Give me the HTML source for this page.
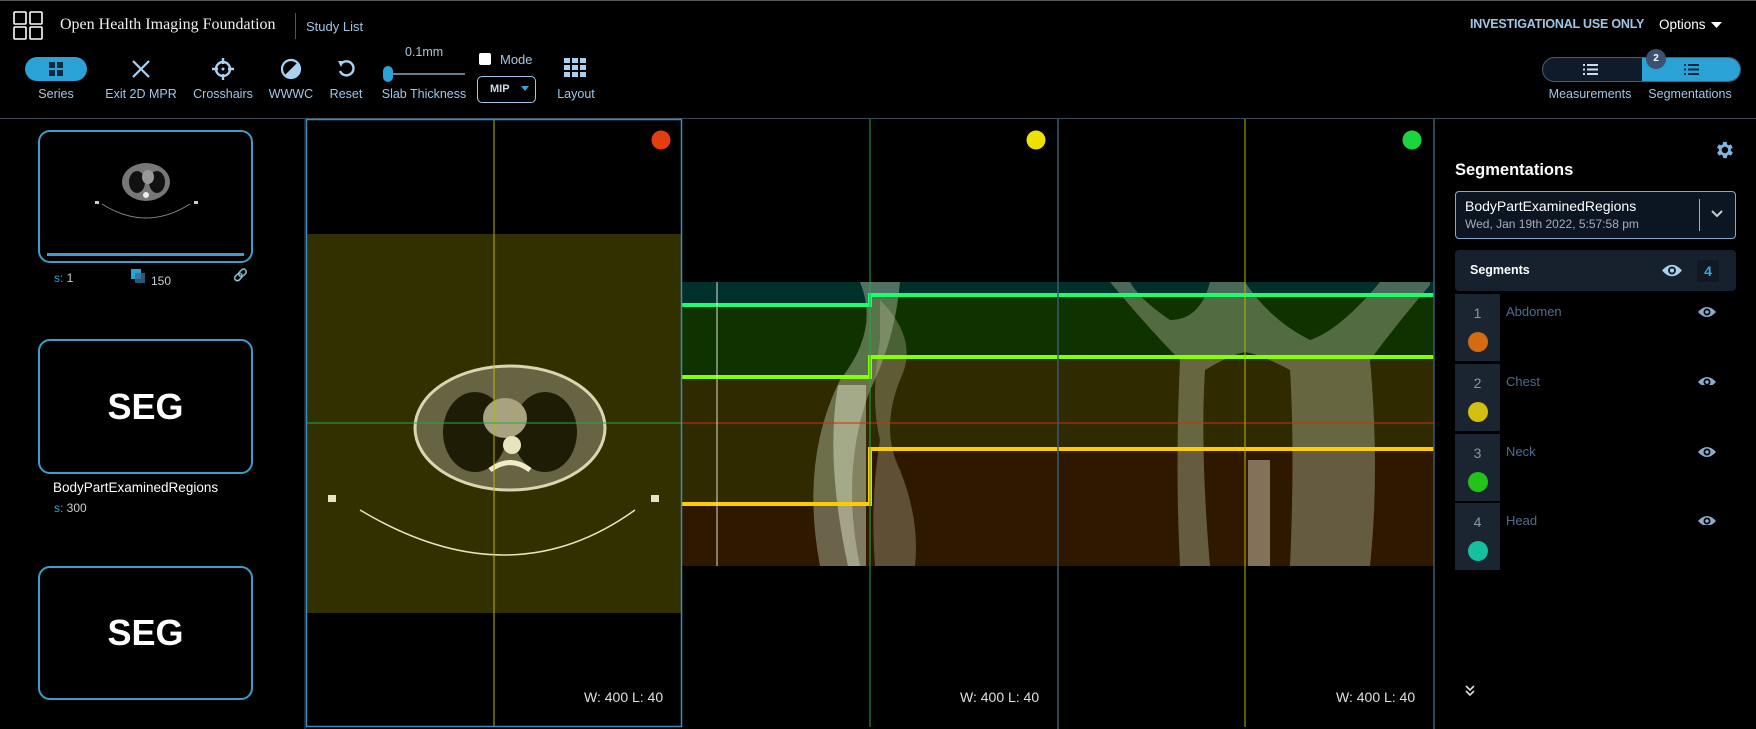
<!DOCTYPE html>
<html><head><meta charset="utf-8"><style>
*{margin:0;padding:0;box-sizing:border-box}
body{width:1756px;height:729px;background:#000;overflow:hidden;position:relative;font-family:"Liberation Sans",sans-serif;color:#fff}
.a{position:absolute}
.lbl{position:absolute;top:87px;font-size:12.5px;color:#9fc6e6;transform:translateX(-50%);white-space:nowrap}
.thumb{position:absolute;left:38px;width:215px;border:2px solid #3a9fcc;border-radius:12px}
.seg{font-size:36px;font-weight:bold;text-align:center;color:#fff}
.row{position:absolute;left:1455px;width:281px;height:67px}
.num{position:absolute;left:0;top:0;width:45px;height:67px;background:#1b2431;color:#8a97a8;font-size:14px;text-align:center;padding-top:11px}
.dot{position:absolute;left:13px;top:38px;width:20px;height:20px;border-radius:50%}
.nm{position:absolute;left:51px;top:10px;font-size:13px;color:#4f6c91}
.wl{position:absolute;font-size:14px;color:#e0e0e0}
</style></head><body>
<div class="a" style="left:0;top:0;width:1756px;height:1px;background:#555"></div>
<svg class="a" style="left:13px;top:11px" width="30" height="29" viewBox="0 0 30 29"><g fill="none" stroke="#fff" stroke-width="1.6"><rect x="1" y="1" width="12" height="12" rx="1"/><rect x="17" y="1" width="12" height="12" rx="1"/><rect x="1" y="16" width="12" height="12" rx="1"/><rect x="17" y="16" width="12" height="12" rx="1"/></g></svg>
<div class="a" style="left:60px;top:16px;font-family:'Liberation Serif',serif;font-size:16px;color:#eee">Open Health Imaging Foundation</div>
<div class="a" style="left:295px;top:13px;width:1px;height:26px;background:#555"></div>
<div class="a" style="left:306px;top:19px;font-size:13px;color:#a0c4e4">Study List</div>
<div class="a" style="left:1470px;top:17px;font-size:12.5px;font-weight:bold;color:#9fc6e6;letter-spacing:-0.2px">INVESTIGATIONAL USE ONLY</div>
<div class="a" style="left:1659px;top:17px;font-size:13.5px;color:#fff">Options</div>
<svg class="a" style="left:1711px;top:22px" width="11" height="7"><path d="M0 0H11L5.5 6z" fill="#fff"/></svg>

<div class="a" style="left:25px;top:57px;width:62px;height:24px;border-radius:12px;background:#2ba2d6"></div>
<svg class="a" style="left:49px;top:62px" width="14" height="14"><g fill="#0b2840"><rect x="0" y="0" width="6" height="6"/><rect x="8" y="0" width="6" height="6"/><rect x="0" y="8" width="6" height="6"/><rect x="8" y="8" width="6" height="6"/></g></svg>
<div class="lbl" style="left:56px;color:#a9c6dd">Series</div>
<svg class="a" style="left:131px;top:59px" width="20" height="20"><path d="M2 2L18 18M18 2L2 18" stroke="#a9d2f2" stroke-width="2.2"/></svg>
<div class="lbl" style="left:141px">Exit 2D MPR</div>
<svg class="a" style="left:212px;top:58px" width="22" height="22"><circle cx="11" cy="11" r="7" fill="none" stroke="#a9d2f2" stroke-width="2.4"/><path d="M11 0V6M11 16V22M0 11H6M16 11H22" stroke="#a9d2f2" stroke-width="2.4"/><circle cx="11" cy="11" r="1.5" fill="#a9d2f2"/></svg>
<div class="lbl" style="left:223px">Crosshairs</div>
<svg class="a" style="left:280px;top:58px" width="22" height="22"><circle cx="11" cy="11" r="9" fill="none" stroke="#a9d2f2" stroke-width="2.2"/><path d="M17.4 4.6A9 9 0 0 1 4.6 17.4z" fill="#a9d2f2"/></svg>
<div class="lbl" style="left:291px">WWWC</div>
<svg class="a" style="left:336px;top:58px" width="20" height="20"><path d="M5 6A7 7 0 1 1 4 13" fill="none" stroke="#a9d2f2" stroke-width="2.4"/><path d="M2 3L8 3L5 9z" fill="#a9d2f2"/></svg>
<div class="lbl" style="left:346px">Reset</div>
<div class="a" style="left:405px;top:45px;font-size:12.5px;color:#a9c6dd">0.1mm</div>
<div class="a" style="left:390px;top:73px;width:75px;height:2px;background:#6b7c8c"></div>
<div class="a" style="left:383px;top:66px;width:10px;height:16px;border-radius:5px;background:#2ba2d6"></div>
<div class="lbl" style="left:424px">Slab Thickness</div>
<div class="a" style="left:479px;top:53px;width:12px;height:12px;border-radius:2px;background:#fff"></div>
<div class="a" style="left:500px;top:52px;font-size:13px;color:#a9c6dd">Mode</div>
<div class="a" style="left:477px;top:76px;width:59px;height:27px;border:1px solid #9fc6e6;border-radius:5px"></div>
<div class="a" style="left:490px;top:83px;font-size:11px;font-weight:bold;color:#c8dcec">MIP</div>
<svg class="a" style="left:521px;top:86px" width="8" height="5"><path d="M0 0H8L4 5z" fill="#3aa3d6"/></svg>
<svg class="a" style="left:564px;top:58px" width="22" height="20"><g fill="#a9d2f2"><rect x="0" y="0" width="6" height="5"/><rect x="8" y="0" width="6" height="5"/><rect x="16" y="0" width="6" height="5"/><rect x="0" y="7" width="6" height="5"/><rect x="8" y="7" width="6" height="5"/><rect x="16" y="7" width="6" height="5"/><rect x="0" y="14" width="6" height="5"/><rect x="8" y="14" width="6" height="5"/><rect x="16" y="14" width="6" height="5"/></g></svg>
<div class="lbl" style="left:576px">Layout</div>

<div class="a" style="left:1542px;top:57px;width:199px;height:25px;border:1px solid #4a5d72;border-radius:13px;background:#0f1b2a;overflow:hidden"><div class="a" style="left:99px;top:0;width:100px;height:25px;background:#2ba2d6"></div></div>
<svg class="a" style="left:1583px;top:64px" width="15" height="11"><g fill="#cde"><rect x="0" y="0" width="2" height="2"/><rect x="4" y="0" width="11" height="2"/><rect x="0" y="4.5" width="2" height="2"/><rect x="4" y="4.5" width="11" height="2"/><rect x="0" y="9" width="2" height="2"/><rect x="4" y="9" width="11" height="2"/></g></svg>
<svg class="a" style="left:1684px;top:64px" width="15" height="11"><g fill="#0b2840"><rect x="0" y="0" width="2" height="2"/><rect x="4" y="0" width="11" height="2"/><rect x="0" y="4.5" width="2" height="2"/><rect x="4" y="4.5" width="11" height="2"/><rect x="0" y="9" width="2" height="2"/><rect x="4" y="9" width="11" height="2"/></g></svg>
<div class="a" style="left:1646px;top:49px;width:20px;height:20px;border-radius:50%;background:#3c5170;font-size:10px;font-weight:bold;text-align:center;line-height:20px">2</div>
<div class="lbl" style="left:1590px">Measurements</div>
<div class="lbl" style="left:1690px">Segmentations</div>

<div class="a" style="left:0;top:118px;width:1756px;height:1px;background:#3a4a5a"></div>

<div class="a" style="left:304px;top:119px;width:2px;height:610px;background:#1c2430"></div>
<div class="thumb" style="top:130px;height:133px">
<svg class="a" style="left:0;top:0" width="211" height="129"><ellipse cx="106" cy="50" rx="24" ry="19" fill="#777"/><ellipse cx="97" cy="50" rx="8" ry="11" fill="#111"/><ellipse cx="117" cy="50" rx="8" ry="11" fill="#111"/><ellipse cx="108" cy="45" rx="6" ry="7" fill="#999"/><circle cx="106" cy="63" r="3" fill="#eee"/><path d="M62 72Q106 100 150 72" fill="none" stroke="#888" stroke-width="1"/><rect x="55" y="69" width="4" height="3" fill="#ccc"/><rect x="154" y="69" width="4" height="3" fill="#ccc"/><rect x="7" y="121" width="197" height="3" fill="#3a9fcc"/></svg></div>
<div class="a" style="left:54px;top:271px;font-size:12px;color:#3a9fcc">s: <span style="color:#ccc">1</span></div>
<div class="a" style="left:131px;top:269px;width:10px;height:10px;background:#2ba2d6"></div>
<div class="a" style="left:135px;top:273px;width:10px;height:10px;background:#3b6d8d;opacity:.8"></div>
<div class="a" style="left:151px;top:274px;font-size:12px;color:#ccc">150</div>
<div class="a" style="left:233px;top:268px;font-size:12px;color:#ccc">🔗</div>
<div class="thumb seg" style="top:339px;height:135px;line-height:131px">SEG</div>
<div class="a" style="left:53px;top:480px;font-size:13.5px;color:#fff">BodyPartExaminedRegions</div>
<div class="a" style="left:54px;top:501px;font-size:12px;color:#3a9fcc">s: <span style="color:#ccc">300</span></div>
<div class="thumb seg" style="top:566px;height:134px;line-height:130px">SEG</div>

<svg class="a" style="left:0;top:0" width="1756" height="729">
<rect x="307" y="234" width="374" height="379" fill="#333000"/>
<ellipse cx="510" cy="428" rx="95" ry="62" fill="#6d6a4a" opacity=".9"/>
<ellipse cx="510" cy="428" rx="95" ry="62" fill="none" stroke="#d9d6b0" stroke-width="3"/>
<ellipse cx="475" cy="432" rx="32" ry="40" fill="#1e1c05"/>
<ellipse cx="545" cy="432" rx="32" ry="40" fill="#1e1c05"/>
<ellipse cx="505" cy="418" rx="22" ry="20" fill="#a8a27e"/>
<circle cx="512" cy="445" r="9" fill="#e8e4c0"/>
<path d="M490 470Q510 455 530 470" fill="none" stroke="#f0ecc8" stroke-width="5"/>
<rect x="328" y="495" width="8" height="7" fill="#e8e4c0"/><rect x="651" y="495" width="8" height="7" fill="#e8e4c0"/>
<path d="M360 510Q510 600 635 510" fill="none" stroke="#e8e4c0" stroke-width="1.5"/>
<rect x="682" y="282" width="752" height="284" fill="#00302a"/>
<path d="M682 305H870V295H1434V566H682z" fill="#0f3300"/>
<path d="M682 377H870V357H1434V566H682z" fill="#302a00"/>
<path d="M682 504H870V449H1434V566H682z" fill="#2e1800"/>
<!-- sagittal anatomy -->
<path d="M860 282Q880 330 840 380Q800 460 820 566H860Q840 470 870 390Q895 340 900 282z" fill="#c8d8b8" opacity=".4"/>
<path d="M880 300Q920 340 900 380Q880 430 900 470Q920 520 915 566H875Q870 500 880 440Q870 400 880 340z" fill="#b8b898" opacity=".35"/>
<path d="M838 385Q825 460 848 566H866V385z" fill="#e8f0d8" opacity=".45"/>
<!-- coronal anatomy -->
<path d="M1110 282Q1150 330 1180 360Q1175 470 1180 566H1210Q1200 450 1205 370Q1230 355 1245 352Q1262 355 1290 370Q1295 450 1290 566H1370Q1380 470 1370 360Q1400 320 1430 285V282H1380Q1340 330 1310 340Q1270 320 1245 282H1210Q1200 320 1170 320Q1140 300 1130 282z" fill="#b8c0a0" opacity=".4"/>
<rect x="1248" y="460" width="22" height="106" fill="#e8e0c8" opacity=".45"/>
<polyline points="682,305 870,305 870,295 1434,295" fill="none" stroke="#1aff70" stroke-width="4"/>
<polyline points="682,377 870,377 870,357 1434,357" fill="none" stroke="#88ff00" stroke-width="4"/>
<polyline points="682,504 870,504 870,449 1434,449" fill="none" stroke="#ffcc00" stroke-width="4"/>
<line x1="494" y1="119" x2="494" y2="727" stroke="#b8b800" stroke-width="1"/>
<line x1="307" y1="423" x2="681" y2="423" stroke="#22aa44" stroke-width="1"/>
<line x1="682" y1="423" x2="1434" y2="423" stroke="#cc3300" stroke-width="1"/>
<line x1="717" y1="282" x2="717" y2="566" stroke="#ddd" stroke-width="1"/>
<line x1="870" y1="119" x2="870" y2="727" stroke="#22aa44" stroke-width="1"/>
<line x1="1245" y1="119" x2="1245" y2="727" stroke="#b8b800" stroke-width="1"/>
<line x1="1058" y1="119" x2="1058" y2="729" stroke="#3c5a70" stroke-width="1.5"/>
<line x1="1434" y1="119" x2="1434" y2="729" stroke="#3c5a70" stroke-width="1.5"/>
<rect x="306.5" y="119.5" width="375" height="607" fill="none" stroke="#3d8bbd" stroke-width="1.5"/>
<circle cx="661" cy="140" r="9.5" fill="#e43d12"/>
<circle cx="1036" cy="140" r="9.5" fill="#f0e000"/>
<circle cx="1412" cy="140" r="9.5" fill="#1ad63c"/>
</svg>
<div class="wl" style="left:584px;top:689px">W: 400 L: 40</div>
<div class="wl" style="left:960px;top:689px">W: 400 L: 40</div>
<div class="wl" style="left:1336px;top:689px">W: 400 L: 40</div>

<svg class="a" style="left:1713px;top:139px" width="22" height="22" viewBox="0 0 24 24"><path fill="#7fb4e0" d="M19.4 13a7.5 7.5 0 0 0 0-2l2.1-1.6-2-3.5-2.5 1a7.6 7.6 0 0 0-1.7-1L15 3.2h-4l-.4 2.7a7.6 7.6 0 0 0-1.7 1l-2.5-1-2 3.5L6.6 11a7.5 7.5 0 0 0 0 2l-2.1 1.6 2 3.5 2.5-1a7.6 7.6 0 0 0 1.7 1l.4 2.7h4l.4-2.7a7.6 7.6 0 0 0 1.7-1l2.5 1 2-3.5zM13 15.5a3.5 3.5 0 1 1 0-7 3.5 3.5 0 0 1 0 7z"/></svg>
<div class="a" style="left:1455px;top:161px;font-size:16.5px;font-weight:bold">Segmentations</div>
<div class="a" style="left:1455px;top:191px;width:281px;height:48px;border:1px solid #8aa9c8;border-radius:4px;background:#0c1622"></div>
<div class="a" style="left:1465px;top:198px;font-size:14px">BodyPartExaminedRegions</div>
<div class="a" style="left:1465px;top:217px;font-size:12px;color:#aab">Wed, Jan 19th 2022, 5:57:58 pm</div>
<div class="a" style="left:1699px;top:199px;width:1px;height:32px;background:#aaa"></div>
<svg class="a" style="left:1711px;top:210px" width="12" height="8"><path d="M1 1L6 6L11 1" fill="none" stroke="#ccc" stroke-width="2"/></svg>
<div class="a" style="left:1455px;top:250px;width:281px;height:41px;background:#17202d;border-radius:4px"></div>
<div class="a" style="left:1470px;top:263px;font-size:12.5px;font-weight:bold">Segments</div>
<svg class="a" style="left:1661px;top:263px" width="22" height="15"><path d="M1 7.5Q11 -4 21 7.5Q11 19 1 7.5z" fill="#a9d2f2"/><circle cx="11" cy="7.5" r="4" fill="#17202d"/><circle cx="11" cy="7.5" r="2" fill="#a9d2f2"/></svg>
<div class="a" style="left:1697px;top:260px;width:22px;height:22px;background:#101824;color:#3aa3e0;font-weight:bold;font-size:14px;text-align:center;line-height:22px">4</div>

<div class="row" style="top:294px"><div class="num">1<div class="dot" style="background:#d46a12"></div></div><div class="nm">Abdomen</div></div>
<div class="row" style="top:364px"><div class="num">2<div class="dot" style="background:#d2bf12"></div></div><div class="nm">Chest</div></div>
<div class="row" style="top:434px"><div class="num">3<div class="dot" style="background:#24c21a"></div></div><div class="nm">Neck</div></div>
<div class="row" style="top:503px"><div class="num">4<div class="dot" style="background:#14c0a0"></div></div><div class="nm">Head</div></div>
<svg class="a" style="left:1697px;top:304px" width="20" height="81"><g><path d="M1 8Q10 -2 19 8Q10 18 1 8z" fill="#8aaccc"/><circle cx="10" cy="8" r="3.5" fill="#000"/><circle cx="10" cy="8" r="1.8" fill="#8aaccc"/></g><g transform="translate(0,70)"><path d="M1 8Q10 -2 19 8Q10 18 1 8z" fill="#8aaccc"/><circle cx="10" cy="8" r="3.5" fill="#000"/><circle cx="10" cy="8" r="1.8" fill="#8aaccc"/></g></svg>
<svg class="a" style="left:1697px;top:444px" width="20" height="81"><g><path d="M1 8Q10 -2 19 8Q10 18 1 8z" fill="#8aaccc"/><circle cx="10" cy="8" r="3.5" fill="#000"/><circle cx="10" cy="8" r="1.8" fill="#8aaccc"/></g><g transform="translate(0,69)"><path d="M1 8Q10 -2 19 8Q10 18 1 8z" fill="#8aaccc"/><circle cx="10" cy="8" r="3.5" fill="#000"/><circle cx="10" cy="8" r="1.8" fill="#8aaccc"/></g></svg>
<svg class="a" style="left:1465px;top:685px" width="10" height="11"><path d="M1 1L5 5L9 1M1 6L5 10L9 6" fill="none" stroke="#ddd" stroke-width="1.6"/></svg>
</body></html>
